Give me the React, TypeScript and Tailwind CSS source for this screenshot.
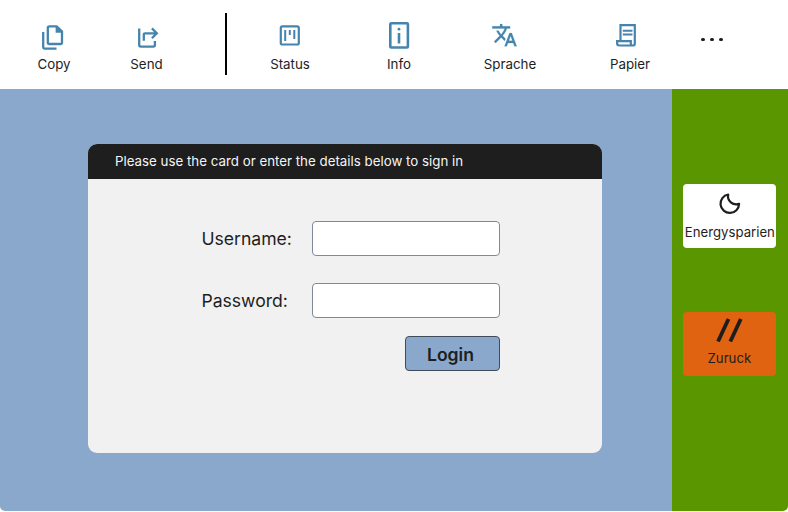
import type { ReactNode } from "react";

const BLUE = "#4585ad";

function NavItem({ label, className, children }: { label: string; className: string; children: ReactNode }) {
  return (
    <button className={`flex w-[60px] shrink-0 flex-col items-center pt-5 ${className}`}>
      {children}
      <span className="mt-[2px] whitespace-nowrap text-[13.33px] leading-5">{label}</span>
    </button>
  );
}

function CopyIcon() {
  return (
    <svg className="size-8" viewBox="38 20 32 32" fill="none" stroke={BLUE} strokeWidth="2.3">
      <path d="M43.2 32V47.1Q43.2 48.7 44.8 48.7H56.5" />
      <path d="M49.8 26.3H56.7L62 31.6V42.4Q62 44 60.4 44H49.4Q47.8 44 47.8 42.4V27.9Q47.8 26.3 49.4 26.3Z" />
      <path d="M55.6 25.5V32.8H62.8Z" fill={BLUE} stroke="none" />
    </svg>
  );
}

function SendIcon() {
  return (
    <svg className="size-8" viewBox="131 20 32 32" fill="none" stroke={BLUE} strokeWidth="2.3">
      <path d="M139.2 28.5V45Q139.2 46.6 140.8 46.6H153.3Q154.9 46.6 154.9 45V41" />
      <path d="M143.8 40.8V34.5Q143.8 33.3 145 33.3H156.5M151.9 28.4L156.8 33.3L151.9 38.2" />
    </svg>
  );
}

function StatusIcon() {
  return (
    <svg className="size-8" viewBox="274 20 32 32" fill="none" stroke={BLUE} strokeWidth="2">
      <rect x="280.8" y="26.3" width="18" height="18.2" rx="1.6" strokeWidth="2.2" />
      <path d="M285.2 30V41M289.8 30V35M294.3 30V39" />
    </svg>
  );
}

function InfoIcon() {
  return (
    <svg className="size-8" viewBox="383 20 32 32" fill="none" stroke={BLUE}>
      <rect x="390.3" y="23.3" width="17.6" height="24.2" rx="1" strokeWidth="2.6" />
      <path d="M399 33V43.5" strokeWidth="2.6" />
      <circle cx="399" cy="29.2" r="1.4" fill={BLUE} stroke="none" />
    </svg>
  );
}

function LanguageIcon() {
  return (
    <svg className="size-8" viewBox="494 20 32 32" fill={BLUE} overflow="visible">
      <path
        stroke={BLUE}
        strokeWidth="0.2"
        transform="translate(491.2 21.9) scale(1.11)"
        d="M12.87 15.07l-2.54-2.51.03-.03c1.74-1.94 2.98-4.17 3.71-6.53H17V4h-7V2H8v2H1v1.99h11.17C11.5 7.92 10.44 9.75 9 11.35 8.07 10.32 7.3 9.19 6.69 8h-2c.73 1.63 1.73 3.17 2.98 4.56l-5.09 5.02L4 19l5-5 3.11 3.11.76-2.04zM18.5 10h-2L12 22h2l1.12-3h4.75L21 22h2l-4.5-12zm-2.62 7l1.62-4.33L19.12 17h-3.24z"
      />
    </svg>
  );
}

function PaperIcon() {
  return (
    <svg className="size-8" viewBox="614 20 32 32" fill="none" stroke={BLUE} strokeWidth="2.2">
      <path d="M620.5 40.5V25.2H634.8V43.4Q634.8 45.5 632.8 45.5Q630.8 45.5 630.8 43.4V41.2H617.1V43.3Q617.1 45.5 619.3 45.5H632.8" />
      <path d="M622.8 30.8H632.5M622.8 34.4H632.5" strokeWidth="2" />
    </svg>
  );
}

function Field({ label, type }: { label: string; type: string }) {
  return (
    <label className="flex h-[35px] items-center">
      <span className="w-[110.5px] pt-[1.5px] text-[17.6px]">{label}</span>
      <input type={type} className="h-[35px] w-[188px] rounded-[4px] border border-[#7d8a9c] bg-white px-2 outline-none" />
    </label>
  );
}

export default function App() {
  return (
    <div className="flex h-[512px] w-[788px] flex-col overflow-hidden bg-white font-['Inter',sans-serif] text-[#1e1e1e]">
      <nav className="flex h-[88.5px] shrink-0">
        <NavItem label="Copy" className="ml-6"><CopyIcon /></NavItem>
        <NavItem label="Send" className="ml-[32.5px]"><SendIcon /></NavItem>
        <div className="ml-12 mt-[13px] h-[62px] w-[2.5px] shrink-0 bg-black" />
        <NavItem label="Status" className="ml-[33px]"><StatusIcon /></NavItem>
        <NavItem label="Info" className="ml-[49px]"><InfoIcon /></NavItem>
        <NavItem label="Sprache" className="ml-[51px]"><LanguageIcon /></NavItem>
        <NavItem label="Papier" className="ml-[60px]"><PaperIcon /></NavItem>
        <button className="ml-[41px] mt-[37.5px] flex h-[4px] gap-[5.5px]" aria-label="More">
          <i className="size-[3.5px] rounded-full bg-[#1e1e1e]" />
          <i className="size-[3.5px] rounded-full bg-[#1e1e1e]" />
          <i className="size-[3.5px] rounded-full bg-[#1e1e1e]" />
        </button>
      </nav>

      <div className="flex h-[422.5px] w-[787.5px] overflow-hidden rounded-b-[5px]">
        <main className="w-[672.4px] shrink-0 bg-[#89a8cc] pl-[88.4px] pt-[55.2px]">
          <section className="h-[309.6px] w-[513.2px] overflow-hidden rounded-[9px] bg-[#f1f1f1]">
            <header className="flex h-[35.3px] items-center bg-[#1e1e1e] pl-[26.6px] pt-[1px] text-[13.32px] text-[#f5f5f5]">
              Please use the card or enter the details below to sign in
            </header>
            <form className="flex w-[411.6px] flex-col pl-[113px] pt-[42.3px]">
              <Field label="Username:" type="text" />
              <div className="mt-[27px]"><Field label="Password:" type="password" /></div>
              <button type="button" className="mt-[18px] h-[35px] w-[95px] self-end rounded-[4px] border border-[#414c5a] bg-[#89a8cc] pr-[4px] pt-[2px] text-[17.6px] font-semibold">
                Login
              </button>
            </form>
          </section>
        </main>
        <aside className="flex flex-1 flex-col bg-[#5a9600] pl-[11px] pt-[95px]">
          <button className="flex h-[64.4px] w-[93px] flex-col items-center rounded-[4px] bg-white pt-[8px]">
            <svg className="size-6" viewBox="718 191.7 24 24" fill="none" stroke="#1e1e1e" strokeWidth="2.2" strokeLinejoin="round">
              <path d="M728.2 194.2A9.3 9.3 0 1 0 739.1 203.6C733 205.7 726.8 200.5 728.2 194.2Z" />
            </svg>
            <span className="mt-[6.5px] whitespace-nowrap text-[13.2px] leading-5">Energysparien</span>
          </button>
          <button className="mt-[64px] flex h-[64.4px] w-[93px] flex-col items-center rounded-[4px] bg-[#e06312] pt-[6px] pr-[1px]">
            <svg className="h-6 w-8" viewBox="713.5 318 32 24" stroke="#1e1e1e" strokeWidth="3.8">
              <path d="M729 319L718.5 341.5M741.3 319L730.8 341.5" />
            </svg>
            <span className="mt-[6px] text-[13.2px] leading-5">Zuruck</span>
          </button>
        </aside>
      </div>
    </div>
  );
}
